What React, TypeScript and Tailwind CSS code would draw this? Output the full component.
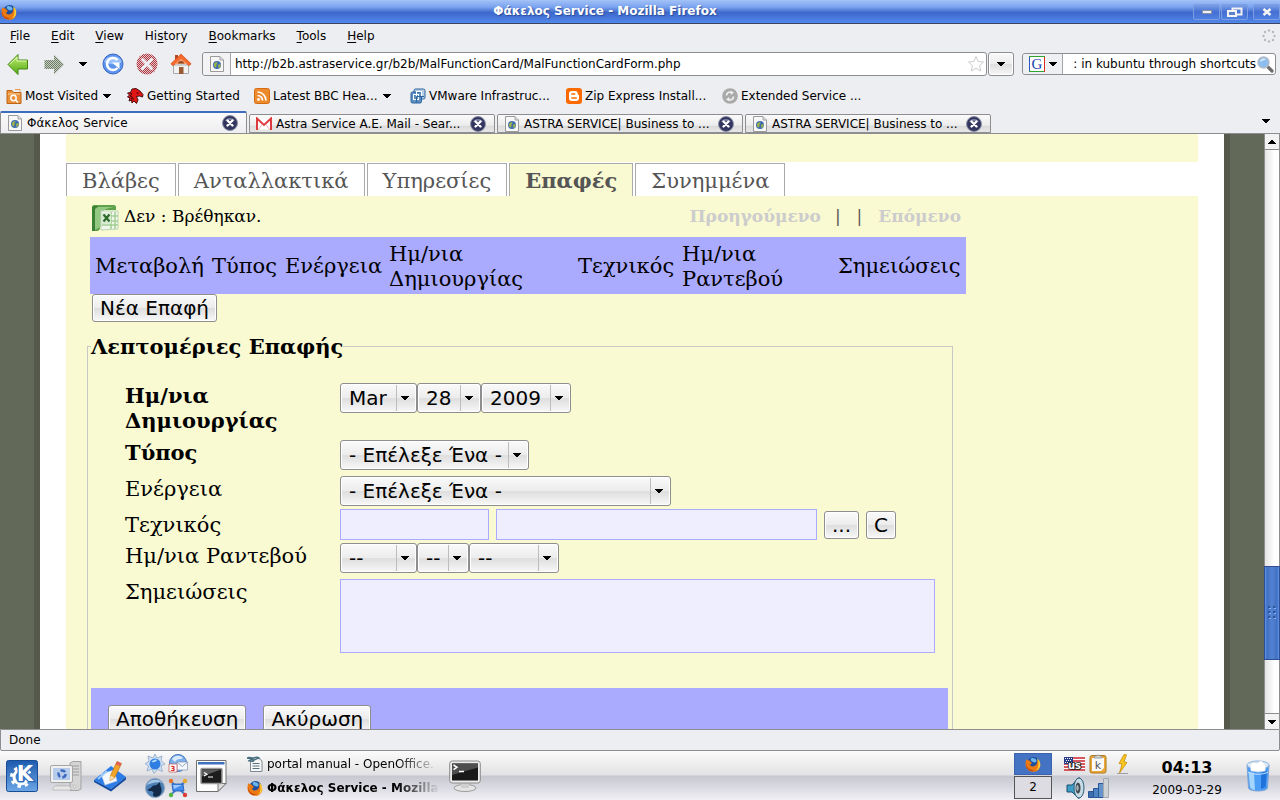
import type { ReactNode } from 'react';
import clsx from 'clsx';

const gloss = "border border-[#8e8e90] rounded-[3px] bg-[linear-gradient(#fafafa,#ececec_50%,#dedede_52%,#f8f8f8)] shadow-[inset_0_0_0_1px_#ffffff]";

function Caret({ className }: { className?: string }) {
    return (
        <svg width="8" height="4" viewBox="0 0 8 4" className={clsx("shrink-0", className)} shapeRendering="crispEdges">
            <path d="M0 0h8v1H0zM1 1h6v1H1zM2 2h4v1H2zM3 3h2v1H3z" fill="#000" />
        </svg>
    );
}

function FirefoxIcon() {
    return (
        <svg width="16" height="16" viewBox="0 0 16 16" className="shrink-0">
            <circle cx="8.5" cy="7.5" r="6.5" fill="#1d4f9c" />
            <path d="M6 2.5c2-1 5 0 5.5 2S9 7 8 6 5 5 6 2.5z" fill="#69b5ec" />
            <path d="M1.5 3c.5 1 1 1.300 2 1.200C5 4.500 5.500 5 5.500 6c1 .2 1.500.6 1 1.500L5 8.500c.5 2 2.500 2.500 4.500 1.500 2.500-1 3-3.500 2.500-6 2 1 3.800 4 3.200 6.500C14.500 13.500 12 15.800 8.500 15.800 4 15.800.6 12.500.5 8.500.4 6.200.8 4.500 1.500 3z" fill="#ec7a12" />
            <path d="M12 2.5c3 1.500 4 5.500 2.700 8.500-.7 1.700-2 3-3.700 3.500 2.500-2.500 3.500-7 1-12z" fill="#f9cf3a" />
            <path d="M1 7c.5 5 4 7.500 8.500 7.300C6 16.500.5 13.500 1 7z" fill="#b83a0b" />
        </svg>
    );
}

function PageIcon() {
    return (
        <svg width="16" height="16" viewBox="0 0 16 16" className="shrink-0">
            <path d="M1.5.5H11L14.500 4v11.500h-13z" fill="#f7f7f7" stroke="#9a9a9a" />
            <path d="M11 .5V4h3.500" fill="#ddd" stroke="#a5a5a5" />
            <circle cx="8" cy="9" r="4" fill="#3f6cb0" />
            <path d="M5 8c1-2 3-2 3.500-1.500S7 8 7.500 9 6.500 12 6 11.500 4.800 9.500 5 8zM9 9l2-1 .8 1-1 2.500L9.500 12z" fill="#9db545" />
        </svg>
    );
}

function CloseIcon() {
    return (
        <svg width="16" height="16" viewBox="0 0 16 16" className="shrink-0">
            <circle cx="8" cy="8" r="7.5" fill="#33375f" stroke="#8d90a6" />
            <path d="M3 6a5.500 5 0 0 1 10 0c-3-1.500-7-1.500-10 0z" fill="#7d82a4" />
            <path d="M5.500 5.500l5 5M10.500 5.500l-5 5" stroke="#fff" strokeWidth="2.4" strokeLinecap="round" />
        </svg>
    );
}

function BackIcon() {
    return (
        <svg width="22" height="22" viewBox="0 0 22 22">
            <defs>
                <linearGradient id="green" x1="0" y1="0" x2="0" y2="1">
                    <stop offset="0" stopColor="#c2ef72" />
                    <stop offset="1" stopColor="#52a913" />
                </linearGradient>
            </defs>
            <path d="M1 11.500L11 1.500V7h9.500v9H11v5.500z" fill="url(#green)" stroke="#43890f" strokeLinejoin="round" />
            <path d="M2.800 11.300L10 4v4h9.500" fill="none" stroke="#e2f9b5" />
        </svg>
    );
}

function ForwardIcon() {
    return (
        <svg width="22" height="22" viewBox="0 0 22 22">
            <defs>
                <pattern id="dots" width="2" height="2" patternUnits="userSpaceOnUse">
                    <rect width="2" height="2" fill="#c9cec4" />
                    <path d="M0 0h1v1H0zM1 1h1v1H1z" fill="#6a7961" />
                </pattern>
            </defs>
            <path d="M21 11.500L11 1.500V7H1.500v9H11v5.500z" fill="url(#dots)" />
        </svg>
    );
}

function ReloadIcon() {
    return (
        <svg width="22" height="22" viewBox="0 0 22 22">
            <circle cx="11" cy="11" r="10" fill="#5b93ec" stroke="#3b68c4" />
            <path d="M2 9a9.500 8 0 0 1 18 0c-5 3-13 3-18 0z" fill="#98c0fa" />
            <path d="M15.500 7A6 6 0 1 0 15.500 15" fill="none" stroke="#fff" strokeWidth="2.6" />
            <path d="M10 9.500h7.500v6.500z" fill="#fff" />
        </svg>
    );
}

function StopIcon() {
    return (
        <svg width="22" height="22" viewBox="0 0 22 22">
            <defs>
                <pattern id="reds" width="2" height="2" patternUnits="userSpaceOnUse">
                    <rect width="2" height="2" fill="#e3c9cc" />
                    <path d="M0 0h1v1H0zM1 1h1v1H1z" fill="#b0343e" />
                </pattern>
            </defs>
            <circle cx="11" cy="11" r="10.5" fill="url(#reds)" />
            <path d="M6.500 6.500l9 9M15.500 6.500l-9 9" stroke="#eef0f3" strokeWidth="3" strokeLinecap="round" />
        </svg>
    );
}

function HomeIcon() {
    return (
        <svg width="22" height="22" viewBox="0 0 22 22">
            <path d="M3.500 12h15v8.500h-15z" fill="#f2f2f2" stroke="#aaa" />
            <path d="M9 14h4.500v7H9z" fill="#9a5a35" />
            <path d="M5 2h3v5H5z" fill="#b24a28" />
            <path d="M11 1L.8 10.800l2 2L11 6.500l8.200 6.300 2-2z" fill="#f4692e" stroke="#d4471a" strokeWidth=".6" />
            <path d="M11 5.500l6.500 5.500h-13z" fill="#f79a63" />
            <path d="M8 10.500a3 2.500 0 0 1 6 0z" fill="#8b4a2c" />
        </svg>
    );
}

function FolderSearchIcon() {
    return (
        <svg width="16" height="16" viewBox="0 0 16 16">
            <path d="M1 2.500h5l1.500 2H15v11H1z" fill="#e8913a" stroke="#bf6415" />
            <path d="M2 6h12" stroke="#fbd3a0" />
            <circle cx="7.5" cy="10" r="2.7" fill="none" stroke="#fff" strokeWidth="1.4" />
            <path d="M9.500 12l2.500 2.500" stroke="#fff" strokeWidth="1.4" />
            <path d="M9 1.500h5v2" fill="none" stroke="#e39a55" />
        </svg>
    );
}

function DragonIcon() {
    return (
        <svg width="17" height="16" viewBox="0 0 17 16">
            <path d="M5 1l4-.5L13 3l3 3.500-.5 2.500-3-1-3 .5L11 12l-1.500 3.500L7 13l-2 2-.5-3L2 13l1-3-2.500-1L2.500 7 .5 5l3-.5z" fill="#e01616" stroke="#3b0404" strokeWidth=".9" />
            <path d="M3 5l2 1-2 2 2.500 1L4.500 11l2.500 0" fill="none" stroke="#4a0808" />
            <path d="M9.500 4.500h2v1h-2z" fill="#2b0000" />
        </svg>
    );
}

function FeedIcon() {
    return (
        <svg width="16" height="16" viewBox="0 0 16 16">
            <rect x=".5" y=".5" width="15" height="15" rx="2" fill="#ec8a2c" stroke="#d66c12" />
            <path d="M3.500 4a8.500 8.500 0 0 1 8.500 8.500M3.500 7.500a5 5 0 0 1 5 5" fill="none" stroke="#fff" strokeWidth="1.7" />
            <circle cx="4.5" cy="11.5" r="1.4" fill="#fff" />
        </svg>
    );
}

function VmwareIcon() {
    return (
        <svg width="16" height="16" viewBox="0 0 16 16">
            <rect x="4" y="1" width="11" height="10" rx="1.5" fill="#b5cee6" stroke="#2d639d" />
            <rect x="1" y="4" width="10.5" height="11" rx="1.5" fill="#5d8fc2" stroke="#2d639d" />
            <rect x="3.5" y="6.5" width="5" height="5" fill="none" stroke="#fff" />
            <rect x="6.5" y="3.5" width="5" height="5" fill="none" stroke="#fff" />
            <path d="M6.500 14V8.500H14" fill="none" stroke="#2d639d" />
        </svg>
    );
}

function BloggerIcon() {
    return (
        <svg width="16" height="16" viewBox="0 0 16 16">
            <rect width="16" height="16" rx="3" fill="#ff6a00" />
            <path d="M5.500 3H9c1.800 0 2.800 1.200 2.800 2.700 0 .8.200 1 .7 1 .4.100.5.400.5.800v2.700c0 1.700-1.200 2.800-2.800 2.800H5.800C4.100 13 3 11.900 3 10.200V5.500C3 4 4 3 5.500 3z" fill="#fff" />
            <path d="M5.800 6h3M5.800 10h4.500" stroke="#ff6a00" strokeWidth="1.4" strokeLinecap="round" />
        </svg>
    );
}

function RecycleIcon() {
    return (
        <svg width="16" height="16" viewBox="0 0 16 16">
            <circle cx="8" cy="8" r="7.8" fill="#a9a9a9" />
            <path d="M4.500 7.500c0-3 3-4 5-2.800M11.500 8.500c0 3-3 4-5 2.800" fill="none" stroke="#eee" strokeWidth="1.8" />
            <path d="M8.500 2.500l3.500 2-3 2.500zM7.500 13.500l-3.500-2 3-2.500z" fill="#eee" />
        </svg>
    );
}

function GmailIcon() {
    return (
        <svg width="16" height="14" viewBox="0 0 16 14" className="shrink-0">
            <path d="M1 1.500h14v11H1z" fill="#fff" />
            <path d="M1 13V1.500L8 8l7-6.500V13" fill="none" stroke="#dd3a3e" strokeWidth="2" />
            <path d="M2.500 12.500L6 7.500M13.500 12.500L10 7.500" stroke="#e5a5a5" strokeWidth=".8" />
        </svg>
    );
}

function GoogleIcon() {
    return (
        <svg width="16" height="16" viewBox="0 0 16 16" className="shrink-0">
            <path d="M0 0h16v16H0z" fill="#fff" />
            <path d="M.5 15.500V.5" stroke="#2a56c7" />
            <path d="M0 .5h16" stroke="#2ea32e" />
            <path d="M15.500 1v15" stroke="#de2a1b" />
            <path d="M0 15.500h15" stroke="#2ea32e" />
            <text x="8" y="13" textAnchor="middle" fontFamily="Liberation Serif" fontSize="15" fill="#1a3fae">G</text>
        </svg>
    );
}

function MagnifierIcon() {
    return (
        <svg width="17" height="17" viewBox="0 0 17 17" className="shrink-0">
            <path d="M10.500 10.500l4.500 4.500" stroke="#6b6b6b" strokeWidth="3.2" strokeLinecap="round" />
            <circle cx="6.5" cy="6.5" r="5.5" fill="#8dbdee" stroke="#b4bcc6" strokeWidth="1.4" />
            <path d="M3 6a3.600 3.600 0 0 1 6-2.500C7 4 5 5 3 6z" fill="#d9ecfc" />
        </svg>
    );
}

function ExcelIcon() {
    return (
        <svg width="28" height="28" viewBox="0 0 28 28">
            <path d="M1 3c0-1 1-2 2-2h20c1 0 2 1 2 2v3H9v19l-2 2H1z" fill="#5ea34c" />
            <path d="M3 5c0-1 .8-2 2-2h18c-7 1-13 3-13 10v10l-7 3z" fill="#93c883" />
            <path d="M1 3v24h3V5l4-3H3z" fill="#3b8133" />
            <path d="M10 7h17v18l-17 1z" fill="#f1f7ee" stroke="#bcd6b3" />
            <path d="M20 8v17M24 8v17M11 12h16M11 17h16M11 21h16" stroke="#a2cf92" strokeWidth="1.5" />
            <path d="M11 9h9v11h-9z" fill="#d8ebd2" />
            <path d="M12.500 10.500l6 7M18.500 10.500l-6 7" stroke="#2d6b2a" strokeWidth="2.2" />
        </svg>
    );
}

function KMenuIcon() {
    return (
        <svg width="32" height="32" viewBox="0 0 32 32">
            <defs>
                <linearGradient id="kblue" x1="0" y1="0" x2="0" y2="1">
                    <stop offset="0" stopColor="#1d59ad" />
                    <stop offset="1" stopColor="#6da7e6" />
                </linearGradient>
            </defs>
            <rect x=".5" y=".5" width="31" height="31" rx="2" fill="url(#kblue)" stroke="#174c97" />
            <circle cx="15" cy="17" r="7" fill="none" stroke="#fff" strokeWidth="3" />
            <circle cx="15" cy="17" r="9.5" fill="none" stroke="#fff" strokeWidth="3" strokeDasharray="3.46 4" />
            <text x="19" y="21" textAnchor="middle" fontFamily="DejaVu Sans" fontWeight="bold" fontSize="21" fill="#fff" stroke="#2d6abc" strokeWidth="2.5" paintOrder="stroke">K</text>
        </svg>
    );
}

function ComputerIcon() {
    return (
        <svg width="32" height="30" viewBox="0 0 32 30">
            <path d="M20 2l3-1.500h8V28l-3 1.500h-8z" fill="#d5d5d5" stroke="#a3a3a3" />
            <path d="M22 5h7M22 8h7M22 11h7M22 14h7" stroke="#9d9d9d" />
            <rect x=".5" y="4.500" width="22" height="17" rx="1.5" fill="#f0f0f0" stroke="#a6a6a6" />
            <rect x="3" y="7" width="17" height="12" fill="#b7cbea" />
            <circle cx="12" cy="13" r="3.5" fill="none" stroke="#3d6ac0" strokeWidth="2.5" strokeDasharray="5 2.3" />
            <path d="M8 22h7l2 4H6z" fill="#d0d0d0" />
            <path d="M3 27l2-2h14l2 2v2H3z" fill="#e8e8e8" stroke="#b0b0b0" strokeWidth=".7" />
            <path d="M23 24c3-1 4 3 1 3.500z" fill="#eee" stroke="#aaa" strokeWidth=".6" />
        </svg>
    );
}

function DesktopPencilIcon() {
    return (
        <svg width="33" height="32" viewBox="0 0 33 32">
            <path d="M0 20L17 6l15 11-15 12z" fill="#2c7ce8" />
            <path d="M0 20l17 9 15-12v2.500L17 31.500 0 22z" fill="#124c9f" />
            <path d="M7 14l13-4 3 11-12 4z" fill="#f4f7fc" stroke="#b9c8df" strokeWidth=".6" />
            <path d="M4 19l9-8" stroke="#9bc8fb" strokeWidth="2" />
            <path d="M23 1.500l4.500 2-7 14.500-4.500 2.500.5-5z" fill="#f3a429" stroke="#bd7410" strokeWidth=".7" />
            <path d="M23 1.500l4.500 2-1.300 2.700-4.500-2z" fill="#e36058" />
            <path d="M16.500 15.500l4 2.300-4.500 2.700z" fill="#f7dfb3" />
        </svg>
    );
}

function SunGlobeIcon() {
    return (
        <svg width="20" height="20" viewBox="0 0 20 20">
            <path d="M10 0l2 4 5-2-1 4.500 4 3.500-4 2 1.500 5.500-5-2L9 19.500 7 15l-5 2 1.500-5L0 9.500l4-2L3 2l5 2z" fill="#cfe0f5" stroke="#8da6c6" strokeWidth=".8" />
            <circle cx="10" cy="10" r="5.5" fill="#2f7ee2" />
            <path d="M6.500 8a4.500 4 0 0 1 6-2C11 7 9.500 9 6.500 8z" fill="#b2defc" />
        </svg>
    );
}

function MailGlobeIcon() {
    return (
        <svg width="20" height="20" viewBox="0 0 20 20">
            <circle cx="10" cy="9" r="8.5" fill="#7eb0ea" stroke="#4476c0" />
            <path d="M4 5c3-4 8-4 11-1-3 2-6 0-8 4z" fill="#d8eafc" />
            <path d="M9 8h10.500v8H9z" fill="#f5f7fb" stroke="#8194b3" strokeWidth=".7" />
            <path d="M9 8l5.200 4.500L19.500 8" fill="none" stroke="#8194b3" strokeWidth=".8" />
            <path d="M1 10h8v8H1z" fill="#fff" stroke="#c05353" strokeWidth=".7" />
            <text x="5" y="17" textAnchor="middle" fontFamily="DejaVu Sans" fontWeight="bold" fontSize="7" fill="#d22">3</text>
        </svg>
    );
}

function WolfIcon() {
    return (
        <svg width="20" height="20" viewBox="0 0 20 20">
            <circle cx="10" cy="10" r="9.5" fill="#4c81b8" stroke="#8ea3bc" />
            <path d="M2 7a8.500 7 0 0 1 15.500-2C12 3 6 5 2 7z" fill="#a3c5e6" />
            <path d="M2.500 11.500c3-.5 4-3 6-4l3-.5L15 4l.5 4c2 3 1 7-1 9.500-4 2.500-7 1-6.500-1 .5-2 1-2.500-.5-3s-3.500.5-5-2z" fill="#132a49" />
        </svg>
    );
}

function NetworkIcon() {
    return (
        <svg width="20" height="20" viewBox="0 0 20 20">
            <path d="M2.500 3l15 14M17.500 3l-15 14" stroke="#4d82cb" strokeWidth="2" />
            <path d="M4 6h11l1 7H5z" fill="#408af0" stroke="#1d58ae" strokeWidth=".8" />
            <path d="M5 7h9l-8 4z" fill="#9bc8ff" />
            <circle cx="3" cy="3" r="2.2" fill="#e8742c" />
            <circle cx="17" cy="3" r="2.2" fill="#e8a72c" />
            <circle cx="3" cy="17" r="2.2" fill="#53b33c" />
            <circle cx="17" cy="17" r="2.2" fill="#dd4135" />
        </svg>
    );
}

function TerminalPageIcon() {
    return (
        <svg width="31" height="32" viewBox="0 0 31 32">
            <path d="M.5.5h29.500v23l-8 8H.5z" fill="#fdfdfd" stroke="#707070" />
            <path d="M2 2h26.500v2.500H2z" fill="#3f70bd" />
            <path d="M30 23.500h-8v8z" fill="#ddd" stroke="#777" />
            <rect x="5" y="8.500" width="21" height="15" rx="1" fill="#1c1c1c" stroke="#9a9a9a" strokeWidth="1.5" />
            <path d="M6 9.500h19l-19 7z" fill="#5b5b5b" />
            <path d="M8 12.500l3 1.800-3 1.800M12 17h5" fill="none" stroke="#fff" strokeWidth="1.2" />
        </svg>
    );
}

function MonitorIcon() {
    return (
        <svg width="32" height="32" viewBox="0 0 32 32">
            <ellipse cx="16" cy="28" rx="11" ry="3.5" fill="#e5e5e5" stroke="#9b9b9b" />
            <path d="M12 22h8v6h-8z" fill="#cfcfcf" />
            <rect x=".7" y="1" width="30.6" height="22" rx="2.5" fill="#ececec" stroke="#8b8b8b" />
            <rect x="3" y="3.500" width="26" height="17" fill="#191919" />
            <path d="M3 3.500h26v4L3 15z" fill="#4e4e4e" />
            <path d="M4.500 5l3.500 2.300-3.500 2.300M10 11.500h5" fill="none" stroke="#fff" strokeWidth="1.5" />
        </svg>
    );
}

function DocumentIcon() {
    return (
        <svg width="16" height="16" viewBox="0 0 16 16" className="shrink-0">
            <path d="M3.500 2h8L15 5v10.500H3.500z" fill="#f8f8f8" stroke="#7d8a92" />
            <path d="M0 2c3-2 5 1 7 0s4-1 5 0c-2 0-3 2-5 2S3 2 0 2zM1 5c2-1 4 1 6 0" fill="none" stroke="#426b7d" strokeWidth="1.3" />
            <path d="M5.500 7.500h7M5.500 10h7M5.500 12.500h7" stroke="#52727f" strokeWidth="1.2" />
        </svg>
    );
}

function FlagIcon() {
    return (
        <svg width="21" height="14" viewBox="0 0 21 14">
            <path d="M0 0h21v14H0z" fill="#fff" />
            <path d="M0 1h21M0 4h21M0 7h21M0 10h21M0 13h21" stroke="#c9202b" strokeWidth="1.6" />
            <path d="M0 0h9v7H0z" fill="#283c86" />
            <path d="M1 1.500h7M2 3.500h6M1 5.500h7" stroke="#fff" strokeDasharray="1 1" />
            <text x="10.5" y="11.5" textAnchor="middle" fontFamily="DejaVu Sans" fontWeight="bold" fontSize="10" fill="#fff" stroke="#111" strokeWidth="1.6" paintOrder="stroke">us</text>
        </svg>
    );
}

function ClipboardIcon() {
    return (
        <svg width="18" height="21" viewBox="0 0 18 21">
            <rect x="1" y="2.500" width="16" height="17.500" rx="2" fill="#e9a93a" stroke="#b27615" />
            <path d="M3 5h12v10l-3 3H3z" fill="#fafafa" />
            <path d="M5 5V3h2.500a1.700 1.700 0 0 1 3 0H13v2z" fill="#d9d9d9" stroke="#8a8a8a" strokeWidth=".8" />
            <text x="9" y="15.500" textAnchor="middle" fontFamily="DejaVu Sans" fontSize="11" fill="#555">k</text>
        </svg>
    );
}

function BoltIcon() {
    return (
        <svg width="12" height="20" viewBox="0 0 12 20">
            <path d="M7 .5L2 9.500l3 .5-2.500 9L10 8.500l-3-.5L9.500.8z" fill="#f9c81e" stroke="#c98a0a" strokeWidth=".8" />
            <path d="M0 19.500h11" stroke="#8e8e96" strokeWidth=".8" />
        </svg>
    );
}

function SpeakerIcon() {
    return (
        <svg width="20" height="22" viewBox="0 0 20 22">
            <path d="M1 8h5l7-7.500v21L6 15H1z" fill="#3d9dc5" stroke="#1c4f6d" />
            <ellipse cx="13" cy="11" rx="5" ry="10" fill="#c9dbe4" stroke="#2d5f7c" />
            <ellipse cx="12" cy="11" rx="2.5" ry="5.5" fill="#404a50" />
            <ellipse cx="11.5" cy="11" rx="1.2" ry="3" fill="#a6b6be" />
        </svg>
    );
}

function SignalIcon() {
    return (
        <svg width="21" height="20" viewBox="0 0 21 20">
            <path d="M.5 13.500h5v6h-5z" fill="#3c6fb0" stroke="#2a5593" />
            <path d="M5.500 10.500h5v9h-5z" fill="#4f84c4" stroke="#2a5593" />
            <path d="M10.500 5.500h5v14h-5z" fill="#6594cc" stroke="#2a5593" />
            <path d="M15.500.5h5v19h-5z" fill="#cfd2d5" stroke="#a5a9ae" />
        </svg>
    );
}

function TrashIcon() {
    return (
        <svg width="24" height="32" viewBox="0 0 24 32">
            <path d="M1 5l1.500 23c1 4 18 4 19 0L23 5z" fill="#4b9df5" stroke="#7fa3d3" />
            <path d="M2.500 12l1.500 15c.5 2 3 3 5 3L8 13z" fill="#a5d4fd" />
            <path d="M15 13l6-2-1.500 16-4.500 2z" fill="#1f72da" />
            <path d="M2 12c5 3 15 3 20 0" fill="none" stroke="#c8e2fc" />
            <ellipse cx="12" cy="5" rx="11" ry="4" fill="#dcecfc" stroke="#8fb4df" />
            <path d="M4 5l3-3 4 1 4-2.500L20 5l-1 6-7 1-7-1z" fill="#fff" stroke="#c2cfde" strokeWidth=".6" />
        </svg>
    );
}

function ThrobberIcon() {
    return (
        <svg width="14" height="14" viewBox="0 0 14 14" fill="#b9b9bd">
            <circle cx="7" cy="1.5" r="1.2" />
            <circle cx="11" cy="3" r="1.2" />
            <circle cx="12.5" cy="7" r="1.2" />
            <circle cx="11" cy="11" r="1.2" />
            <circle cx="7" cy="12.5" r="1.2" />
            <circle cx="3" cy="11" r="1.2" />
            <circle cx="1.5" cy="7" r="1.2" />
            <circle cx="3" cy="3" r="1.2" />
        </svg>
    );
}

function TitleBar() {
    const frame = "w-[27px] h-4 rounded-[2px] border border-[#7d9fe2] bg-[linear-gradient(#7ba0e8,#456fd2_50%,#4f80e2)] flex items-center justify-center";
    return (
        <header className="h-6 shrink-0 flex items-center pl-px border-b border-[#3b4361] bg-[linear-gradient(#a3c3f8,#7ba4ef_30%,#3d67cb_55%,#5289ec)]">
            <FirefoxIcon />
            <h1 className="flex-1 text-center text-[12px] leading-4 pb-0.5 font-bold text-white [text-shadow:1px_1px_1px_#2a4c9a]">Φάκελος Service - Mozilla Firefox</h1>
            <div className="flex gap-px">
                <button aria-label="Minimize" className={frame}><span className="w-2.5 h-1 bg-[#f1f1f1] border border-[#8792a8]" /></button>
                <button aria-label="Restore" className={frame}>
                    <svg width="17" height="10" viewBox="0 0 17 10"><path d="M6.500 1.500h9v6h-9z" fill="none" stroke="#f3f3f3" strokeWidth="2" /><path d="M2 4h8v5H2z" fill="#5b80cc" stroke="#f3f3f3" strokeWidth="2" /></svg>
                </button>
                <button aria-label="Close" className={clsx(frame, "ml-1")}>
                    <svg width="10" height="8" viewBox="0 0 10 8"><path d="M1.500 1l7 6M8.500 1l-7 6" stroke="#f5f5f5" strokeWidth="2.6" /></svg>
                </button>
            </div>
        </header>
    );
}

function MenuBar() {
    const menus = [["", "F", "ile"], ["", "E", "dit"], ["", "V", "iew"], ["Hi", "s", "tory"], ["", "B", "ookmarks"], ["", "T", "ools"], ["", "H", "elp"]];
    return (
        <nav className="h-6 shrink-0 flex items-center gap-[21px] pl-2.5 pr-1">
            {menus.map(([before, key, after]) => (
                <button key={key}>{before}<u className="underline-offset-2">{key}</u>{after}</button>
            ))}
            <span className="ml-auto"><ThrobberIcon /></span>
        </nav>
    );
}

function NavBar() {
    return (
        <div className="h-8 shrink-0 flex items-center pl-[7px] pr-1">
            <button aria-label="Back"><BackIcon /></button>
            <button aria-label="Forward" className="ml-3.5"><ForwardIcon /></button>
            <button aria-label="History" className="ml-3.5"><Caret /></button>
            <button aria-label="Reload" className="ml-[15px]"><ReloadIcon /></button>
            <button aria-label="Stop" className="ml-3"><StopIcon /></button>
            <button aria-label="Home" className="ml-3"><HomeIcon /></button>
            <div className="ml-2.5 flex-1 h-6 flex items-center rounded-[3px] border border-[#8e8e90] bg-white">
                <span className="h-full w-7 flex items-center justify-center border-r border-[#a5a5a8] bg-[#f3f3f5] rounded-l-[3px]"><PageIcon /></span>
                <input aria-label="Location" className="flex-1 h-5 px-1 outline-none" defaultValue="http://b2b.astraservice.gr/b2b/MalFunctionCard/MalFunctionCardForm.php" />
                <svg width="18" height="18" viewBox="0 0 18 18" className="mr-px"><path d="M9 1.500l2.200 5 5.300.5-4 3.700 1.200 5.300L9 13.300 4.300 16l1.200-5.300-4-3.700 5.300-.5z" fill="#fff" stroke="#ccc" /></svg>
            </div>
            <button aria-label="Show history" className={clsx(gloss, "ml-px w-[26px] h-6 flex items-center justify-center")}><Caret /></button>
            <div className="ml-2 w-[254px] h-[22px] flex items-center rounded-[3px] border border-[#8e8e90] bg-white">
                <button aria-label="Search engine" className="h-full w-10 shrink-0 pl-px flex items-center justify-center gap-1 border-r border-[#a5a5a8] bg-[#eff0f3] rounded-l-[3px]"><GoogleIcon /><Caret /></button>
                <input aria-label="Search" className="flex-1 min-w-0 h-5 text-right outline-none" defaultValue=": in kubuntu through shortcuts" />
                <button aria-label="Search" className="mx-px"><MagnifierIcon /></button>
            </div>
        </div>
    );
}

function BookmarksBar() {
    const items = [
        { icon: <FolderSearchIcon />, title: "Most Visited", menu: true, width: "w-[121px]" },
        { icon: <DragonIcon />, title: "Getting Started", width: "w-[127px]" },
        { icon: <FeedIcon />, title: "Latest BBC Hea...", menu: true, width: "w-[156px]" },
        { icon: <VmwareIcon />, title: "VMware Infrastruc...", width: "w-[156px]" },
        { icon: <BloggerIcon />, title: "Zip Express Install...", width: "w-[156px]" },
        { icon: <RecycleIcon />, title: "Extended Service ...", width: "w-[156px]" }
    ];
    return (
        <nav className="h-[31px] shrink-0 flex items-center pl-1.5">
            {items.map((item) => (
                <a key={item.title} href="#" className={clsx("flex items-center gap-[3px] whitespace-nowrap", item.width)}>
                    {item.icon}
                    {item.title}
                    {item.menu && <Caret className="ml-0.5" />}
                </a>
            ))}
        </nav>
    );
}

function TabStrip() {
    const tabs = [
        { icon: <PageIcon />, title: "Φάκελος Service" },
        { icon: <GmailIcon />, title: "Astra Service A.E. Mail - Sear..." },
        { icon: <PageIcon />, title: "ASTRA SERVICE| Business to ..." },
        { icon: <PageIcon />, title: "ASTRA SERVICE| Business to ..." }
    ];
    return (
        <div className="h-[23px] shrink-0 flex items-end gap-0.5 border-b border-[#8e8e90]">
            {tabs.map((tab, index) => (
                <div
                    key={index}
                    className={clsx("flex items-center gap-1 pl-1.5 pr-2 border-x border-[#8e8e90] rounded-t-[2px]", index === 0
                        ? "w-[247px] h-[22px] border-t-2 border-t-[#3f6cbb] bg-[linear-gradient(#fafafa,#eeeef0)]"
                        : "w-[246px] h-[19px] border-t border-b bg-[linear-gradient(#fafafa,#ededed_60%,#dcdcdc_65%,#e6e6e6)]"
                    )}
                >
                    {tab.icon}
                    <button className="flex-1 text-left whitespace-nowrap leading-4">{tab.title}</button>
                    <button aria-label="Close tab"><CloseIcon /></button>
                </div>
            ))}
            <button aria-label="List all tabs" className="ml-auto mr-2.5 mb-2.5"><Caret /></button>
        </div>
    );
}

type SelectProps = { id?: string; label?: string; value: string; width: string };

function Select({ id, label, value, width }: SelectProps) {
    return (
        <span className={clsx("relative flex h-[30px]", width)}>
            <select id={id} aria-label={label} defaultValue={value} className={clsx(gloss, "appearance-none w-full h-full pl-2 font-['DejaVu_Sans',sans-serif] text-[20px] leading-6 outline-none")}>
                <option>{value}</option>
            </select>
            <span className="absolute right-[5px] top-0.5 bottom-0.5 w-4 flex items-center justify-center border-l border-[#bdbdbd] pointer-events-none"><Caret /></span>
        </span>
    );
}

function Row({ label, htmlFor, bold, className, children }: { label: string; htmlFor: string; bold?: boolean; className?: string; children: ReactNode }) {
    return (
        <div className={clsx("flex", className)}>
            <label htmlFor={htmlFor} className={clsx("w-[215px] pr-4 shrink-0 leading-[25px]", bold ? "font-bold" : "pt-px")}>{label}</label>
            {children}
        </div>
    );
}

function ContactForm() {
    const field = "border border-[#aaaaff] bg-[#eeeeff] outline-none";
    const button = clsx(gloss, "h-7 px-[7px] font-['DejaVu_Sans',sans-serif] text-[20px] leading-6");
    return (
        <fieldset className="mt-3 ml-[21px] w-[866px] border border-[#c8c8c8] pl-[3px] pr-1 pb-1">
            <legend className="font-bold leading-[25px]">Λεπτομέριες Επαφής</legend>
            <div className="pt-6 pl-[34px] pr-[13px]">
                <Row label="Ημ/νια Δημιουργίας" htmlFor="created" bold className="mb-[7px]">
                    <Select id="created" value="Mar" width="w-[77px]" />
                    <Select label="Day" value="28" width="w-16" />
                    <Select label="Year" value="2009" width="w-[90px]" />
                </Row>
                <Row label="Τύπος" htmlFor="type" bold className="mb-1.5">
                    <Select id="type" value="- Επέλεξε Ένα -" width="w-[189px]" />
                </Row>
                <Row label="Ενέργεια" htmlFor="action" className="mb-[3px]">
                    <Select id="action" value="- Επέλεξε Ένα -" width="w-[331px]" />
                </Row>
                <Row label="Τεχνικός" htmlFor="technician" className="mb-[3px] items-center">
                    <input id="technician" className={clsx(field, "w-[149px] h-[31px]")} />
                    <input aria-label="Όνομα" className={clsx(field, "ml-[7px] w-[321px] h-[31px]")} />
                    <button className={clsx(button, "ml-[7px]")}>...</button>
                    <button className={clsx(button, "ml-[7px]")}>C</button>
                </Row>
                <Row label="Ημ/νια Ραντεβού" htmlFor="meeting" className="mb-1.5">
                    <Select id="meeting" value="--" width="w-[77px]" />
                    <Select label="Day" value="--" width="w-[52px]" />
                    <Select label="Year" value="--" width="w-[90px]" />
                </Row>
                <Row label="Σημειώσεις" htmlFor="notes" className="mb-[35px]">
                    <textarea id="notes" className={clsx(field, "block flex-1 h-[74px] resize-none")} />
                </Row>
            </div>
            <div className="flex gap-[17px] h-16 pt-[17px] pl-[17px] bg-[#aaaaff]">
                <button className={button}>Αποθήκευση</button>
                <button className={button}>Ακύρωση</button>
            </div>
        </fieldset>
    );
}

function ServicePage() {
    const tabs = ["Βλάβες", "Ανταλλακτικά", "Υπηρεσίες", "Επαφές", "Συνημμένα"];
    const columns = [
        { title: "Μεταβολή", width: "w-[122px] pl-[5px]" },
        { title: "Τύπος", width: "w-[73px]" },
        { title: "Ενέργεια", width: "w-[104px]" },
        { title: "Ημ/νια Δημιουργίας", width: "w-[189px] pr-8" },
        { title: "Τεχνικός", width: "w-[104px]" },
        { title: "Ημ/νια Ραντεβού", width: "w-[156px] pr-8" },
        { title: "Σημειώσεις", width: "" }
    ];
    return (
        <main className="flex-1 overflow-hidden bg-[#636959] px-[34px] font-['DejaVu_Serif',serif] text-[21px] text-black">
            <div className="min-h-full border-x-[6px] border-[#55584a] bg-white px-[26px]">
                <div className="h-7 bg-[#f9f9d2]" />
                <div className="flex gap-0.5 pt-px text-[#555555]">
                    {tabs.map((tab) => (
                        <button
                            key={tab}
                            className={clsx("px-[15px] h-[33px] border border-b-0 border-[#aaaaaa] leading-[34px]", tab === "Επαφές" ? "bg-[#f9f9d2] font-bold" : "bg-white")}
                        >
                            {tab}
                        </button>
                    ))}
                </div>
                <section className="bg-[#f9f9d2] pb-20">
                    <div className="flex items-start pl-[25px] pt-2 h-[41px] text-[17px] leading-6">
                        <a href="#" aria-label="Excel"><ExcelIcon /></a>
                        <p className="ml-[5px]">Δεν : Βρέθηκαν.</p>
                        <div className="ml-auto mr-[237px] flex font-bold text-[#cccccc]">
                            <span>Προηγούμενο</span>
                            <span className="ml-3.5 font-normal text-[#555555]">|</span>
                            <span className="mx-4 font-normal text-[#555555]">|</span>
                            <span>Επόμενο</span>
                        </div>
                    </div>
                    <table className="ml-6 w-[876px] table-fixed bg-[#aaaaff] leading-[25px]">
                        <thead>
                            <tr className="h-[57px]">
                                {columns.map((col) => (
                                    <th key={col.title} className={clsx("p-0 pt-0.5 text-left font-normal", col.width)}>{col.title}</th>
                                ))}
                            </tr>
                        </thead>
                    </table>
                    <button className={clsx(gloss, "ml-[26px] h-7 px-[7px] block font-['DejaVu_Sans',sans-serif] text-[20px] leading-6")}>Νέα Επαφή</button>
                    <ContactForm />
                </section>
            </div>
        </main>
    );
}

function Scrollbar() {
    return (
        <div className="w-4 shrink-0 flex flex-col border-x border-[#8e8e90] bg-[linear-gradient(90deg,#e4e4e4,#ffffff_70%)]">
            <button aria-label="Scroll up" className="h-4 flex items-center justify-center border-b border-[#8e8e90] bg-[#f3f3f3]"><Caret className="rotate-180" /></button>
            <div className="flex-1" />
            <div className="-mx-px h-[94px] flex items-center justify-center border border-[#2f4f92] bg-[linear-gradient(90deg,#5d93f0,#4270c0_15%,#5283d2_50%,#4270c0_85%,#5d93f0)]">
                <svg width="8" height="14" viewBox="0 0 8 14"><path d="M0 0h2v2H0zM5 0h2v2H5zM0 5h2v2H0zM5 5h2v2H5zM0 10h2v2H0zM5 10h2v2H5z" fill="#2d5496" /><path d="M1 2h2v1H1zM6 2h2v1H6zM1 7h2v1H1zM6 7h2v1H6zM1 12h2v1H1zM6 12h2v1H6z" fill="#8ab3f7" /></svg>
            </div>
            <div className="h-[53px]" />
            <button aria-label="Scroll down" className="h-4 flex items-center justify-center border-t border-[#8e8e90] bg-[#f3f3f3]"><Caret /></button>
        </div>
    );
}

function Taskbar() {
    const fade = "w-[173px] whitespace-nowrap [mask-image:linear-gradient(90deg,#000_75%,transparent)]";
    return (
        <footer className="h-[49px] shrink-0 flex items-center pl-1.5 pr-2.5 bg-[linear-gradient(#fbfbfb,#e2e2e4_49%,#c6c7d0_51%,#f0f0f5)]">
            <button aria-label="K Menu"><KMenuIcon /></button>
            <button aria-label="Computer" className="ml-3"><ComputerIcon /></button>
            <button aria-label="Desktop" className="ml-3"><DesktopPencilIcon /></button>
            <div className="ml-[18px] grid grid-cols-2 gap-x-[3px] gap-y-1">
                <SunGlobeIcon />
                <MailGlobeIcon />
                <WolfIcon />
                <NetworkIcon />
            </div>
            <button aria-label="Terminal" className="ml-2"><TerminalPageIcon /></button>
            <div className="ml-5 flex flex-col">
                <button className="h-6 flex items-center gap-1 text-left"><DocumentIcon /><span className={fade}>portal manual - OpenOffice.</span></button>
                <button className="h-6 flex items-center gap-1 text-left font-bold"><FirefoxIcon /><span className={fade}>Φάκελος Service - Mozilla</span></button>
            </div>
            <button aria-label="Konsole" className="ml-[9px]"><MonitorIcon /></button>
            <div className="ml-auto flex flex-col gap-px">
                <button aria-label="Desktop 1" className="w-[38px] h-[22px] flex items-center justify-center border border-[#3c64ac] bg-[#4573c4]"><FirefoxIcon /></button>
                <button className="w-[38px] h-[23px] flex items-center justify-center border border-[#555555] bg-[#dcdce2]">2</button>
            </div>
            <div className="ml-3 w-[66px] flex flex-col">
                <div className="h-6 flex items-center gap-1"><FlagIcon /><ClipboardIcon /><span className="ml-1.5"><BoltIcon /></span></div>
                <div className="h-6 flex items-center gap-0.5 pl-0.5"><SpeakerIcon /><SignalIcon /></div>
            </div>
            <div className="ml-[18px] w-[78px] flex flex-col items-center">
                <time className="h-7 pt-1 font-bold text-[16px] leading-6">04:13</time>
                <time className="leading-5">2009-03-29</time>
            </div>
            <button aria-label="Trash" className="ml-5"><TrashIcon /></button>
        </footer>
    );
}

export default function App() {
    return (
        <div className="h-screen w-full flex flex-col overflow-hidden bg-[#edeef2] font-['DejaVu_Sans',sans-serif] text-[12px] leading-4 text-black">
            <TitleBar />
            <MenuBar />
            <NavBar />
            <BookmarksBar />
            <TabStrip />
            <div className="flex-1 min-h-0 flex">
                <ServicePage />
                <Scrollbar />
            </div>
            <div className="h-[22px] shrink-0 flex items-center px-2 border border-[#8e8e90] rounded-b-[2px]">Done</div>
            <Taskbar />
        </div>
    );
}
